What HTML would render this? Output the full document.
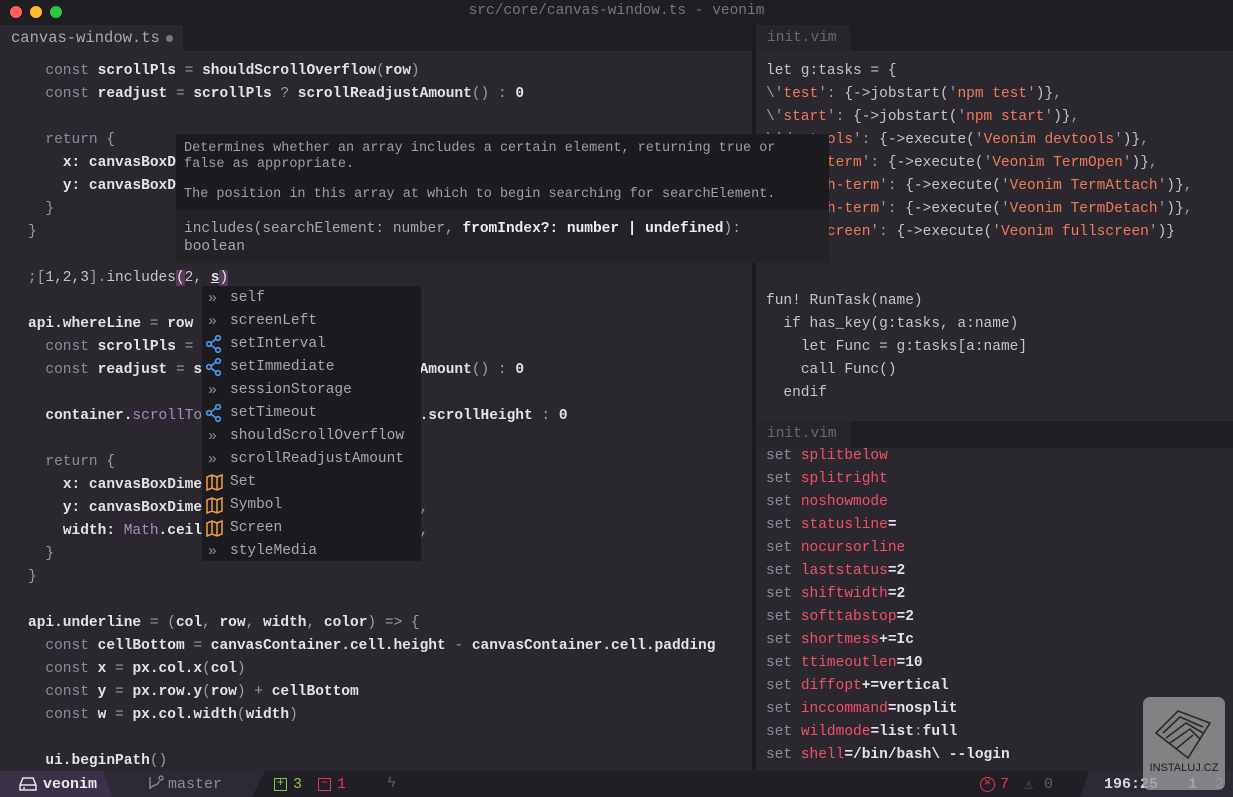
<!DOCTYPE html>
<html><head><meta charset="utf-8"><style>
*{margin:0;padding:0;box-sizing:border-box}
body{width:1233px;height:797px;background:#2a282e;overflow:hidden;position:relative;font-family:"Liberation Mono",monospace;font-size:14.5px;color:#d8d5de}
.abs{position:absolute}
.code{position:absolute;white-space:pre;line-height:23px}
.k{color:#8e8a9a}
.b{color:#e4e1ea;font-weight:bold}
.p{color:#9d99a8}
.s{color:#f07a5a}
.r{color:#f0506a}
.m{color:#a48cc4}
.t{color:#c6c2cf}
</style></head><body>
<!-- title bar -->
<div class="abs" style="left:0;top:0;width:1233px;height:25px;background:#1f1e23"></div>
<div class="abs" style="left:10px;top:6px;width:12px;height:12px;border-radius:6px;background:#fe5f57"></div>
<div class="abs" style="left:30px;top:6px;width:12px;height:12px;border-radius:6px;background:#febc2e"></div>
<div class="abs" style="left:50px;top:6px;width:12px;height:12px;border-radius:6px;background:#28c840"></div>
<div class="abs" style="left:0;top:3px;width:1233px;text-align:center;color:#77737f;font-size:14.5px">src/core/canvas-window.ts - veonim</div>
<!-- left tab bar -->
<div class="abs" style="left:0;top:25px;width:752px;height:26px;background:#1f1e23"></div>
<div class="abs" style="left:0;top:25px;width:183px;height:26px;background:#2a282e"></div>
<div class="abs" style="left:11px;top:29px;color:#aaa6b2;font-size:15.5px">canvas-window.ts</div>
<div class="abs" style="left:166px;top:35px;width:7px;height:7px;border-radius:4px;background:#7a7680"></div>
<!-- divider -->
<div class="abs" style="left:752px;top:25px;width:4px;height:746px;background:#1c1b20"></div>
<!-- right top tab bar -->
<div class="abs" style="left:756px;top:25px;width:477px;height:26px;background:#1f1e23"></div>
<div class="abs" style="left:756px;top:25px;width:94px;height:26px;background:#27252b"></div>
<div class="abs" style="left:767px;top:30px;color:#6a6670">init.vim</div>
<!-- right lower -->
<div class="abs" style="left:756px;top:421px;width:477px;height:27px;background:#1f1e23"></div>
<div class="abs" style="left:756px;top:421px;width:94px;height:27px;background:#27252b"></div>
<div class="abs" style="left:767px;top:426px;color:#6a6670">init.vim</div>

<div class="code" style="left:28px;top:60px">  <span class="k">const</span> <span class="b">scrollPls</span> <span class="p">=</span> <span class="b">shouldScrollOverflow</span><span class="p">(</span><span class="b">row</span><span class="p">)</span>
  <span class="k">const</span> <span class="b">readjust</span> <span class="p">=</span> <span class="b">scrollPls</span> <span class="p">?</span> <span class="b">scrollReadjustAmount</span><span class="p">()</span> <span class="p">:</span> <span class="b">0</span>

  <span class="k">return</span> <span class="p">{</span>
    <span class="b">x: canvasBoxDimensions.x,</span>
    <span class="b">y: canvasBoxDimensions.y,</span>
  <span class="p">}</span>
<span class="p">}</span>

<span class="p">;[</span><span class="t">1,2,3</span><span class="p">].</span><span class="t">includes</span><span style="background:#5a3a5e;color:#e4e1ea">(</span><span class="t">2, </span><span class="b" style="text-decoration:underline">s</span><span style="background:#5a3a5e;color:#e4e1ea">)</span>

<span class="b">api.whereLine</span> <span class="p">=</span> <span class="b">row</span> <span class="p">=&gt; {</span>
  <span class="k">const</span> <span class="b">scrollPls</span> <span class="p">=</span> <span class="b">shouldScrollOverflow(row)</span>
  <span class="k">const</span> <span class="b">readjust</span> <span class="p">=</span> <span class="b">scrollPls ? scrollReadjustAmount</span><span class="p">()</span> <span class="p">:</span> <span class="b">0</span>

  <span class="b">container.</span><span class="m">scrollTop</span> <span class="p">=</span> <span class="b">scrollPls ? container.scrollHeight</span> <span class="p">:</span> <span class="b">0</span>

  <span class="k">return</span> <span class="p">{</span>
    <span class="b">x: canvasBoxDimensions.x,</span>
    <span class="b">y: canvasBoxDimensions.y + row - readjust</span><span class="p">,</span>
    <span class="b">width:</span> <span class="m">Math</span><span class="b">.ceil(window.devicePixelRatio</span><span class="p">),</span>
  <span class="p">}</span>
<span class="p">}</span>

<span class="b">api.underline</span> <span class="p">=</span> <span class="p">(</span><span class="b">col</span><span class="p">,</span> <span class="b">row</span><span class="p">,</span> <span class="b">width</span><span class="p">,</span> <span class="b">color</span><span class="p">)</span> <span class="p">=&gt; {</span>
  <span class="k">const</span> <span class="b">cellBottom</span> <span class="p">=</span> <span class="b">canvasContainer.cell.height</span> <span class="p">-</span> <span class="b">canvasContainer.cell.padding</span>
  <span class="k">const</span> <span class="b">x</span> <span class="p">=</span> <span class="b">px.col.x</span><span class="p">(</span><span class="b">col</span><span class="p">)</span>
  <span class="k">const</span> <span class="b">y</span> <span class="p">=</span> <span class="b">px.row.y</span><span class="p">(</span><span class="b">row</span><span class="p">)</span> <span class="p">+</span> <span class="b">cellBottom</span>
  <span class="k">const</span> <span class="b">w</span> <span class="p">=</span> <span class="b">px.col.width</span><span class="p">(</span><span class="b">width</span><span class="p">)</span>

  <span class="b">ui.beginPath</span><span class="p">()</span></div>

<div class="code" style="left:766px;top:60px"><span class="t">let g:tasks = {</span>
<span class="p">\'</span><span class="s">test</span><span class="p">':</span> <span class="t">{-&gt;jobstart(</span><span class="p">'</span><span class="s">npm test</span><span class="p">'</span><span class="t">)}</span><span class="p">,</span>
<span class="p">\'</span><span class="s">start</span><span class="p">':</span> <span class="t">{-&gt;jobstart(</span><span class="p">'</span><span class="s">npm start</span><span class="p">'</span><span class="t">)}</span><span class="p">,</span>
<span class="p">\'</span><span class="s">devtools</span><span class="p">':</span> <span class="t">{-&gt;execute(</span><span class="p">'</span><span class="s">Veonim devtools</span><span class="p">'</span><span class="t">)}</span><span class="p">,</span>
<span class="p">\'</span><span class="s">open-term</span><span class="p">':</span> <span class="t">{-&gt;execute(</span><span class="p">'</span><span class="s">Veonim TermOpen</span><span class="p">'</span><span class="t">)}</span><span class="p">,</span>
<span class="p">\'</span><span class="s">attach-term</span><span class="p">':</span> <span class="t">{-&gt;execute(</span><span class="p">'</span><span class="s">Veonim TermAttach</span><span class="p">'</span><span class="t">)}</span><span class="p">,</span>
<span class="p">\'</span><span class="s">detach-term</span><span class="p">':</span> <span class="t">{-&gt;execute(</span><span class="p">'</span><span class="s">Veonim TermDetach</span><span class="p">'</span><span class="t">)}</span><span class="p">,</span>
<span class="p">\'</span><span class="s">fullscreen</span><span class="p">':</span> <span class="t">{-&gt;execute(</span><span class="p">'</span><span class="s">Veonim fullscreen</span><span class="p">'</span><span class="t">)}</span>


<span class="t">fun! RunTask(name)</span>
  <span class="t">if has_key(g:tasks, a:name)</span>
    <span class="t">let Func = g:tasks[a:name]</span>
    <span class="t">call Func()</span>
  <span class="t">endif</span></div>

<div class="code" style="left:766px;top:445px"><span class="k">set</span> <span class="r">splitbelow</span>
<span class="k">set</span> <span class="r">splitright</span>
<span class="k">set</span> <span class="r">noshowmode</span>
<span class="k">set</span> <span class="r">statusline</span><span class="b">=</span>
<span class="k">set</span> <span class="r">nocursorline</span>
<span class="k">set</span> <span class="r">laststatus</span><span class="b">=2</span>
<span class="k">set</span> <span class="r">shiftwidth</span><span class="b">=2</span>
<span class="k">set</span> <span class="r">softtabstop</span><span class="b">=2</span>
<span class="k">set</span> <span class="r">shortmess</span><span class="b">+=Ic</span>
<span class="k">set</span> <span class="r">ttimeoutlen</span><span class="b">=10</span>
<span class="k">set</span> <span class="r">diffopt</span><span class="b">+=vertical</span>
<span class="k">set</span> <span class="r">inccommand</span><span class="b">=nosplit</span>
<span class="k">set</span> <span class="r">wildmode</span><span class="b">=list</span><span class="p">:</span><span class="b">full</span>
<span class="k">set</span> <span class="r">shell</span><span class="b">=/bin/bash\ --login</span></div>

<!-- tooltip -->
<div class="abs" style="left:176px;top:134px;width:653px;height:129px;background:#1c1b20"></div>
<div class="abs" style="left:176px;top:210px;width:653px;height:53px;background:#232227"></div>
<div class="code" style="left:184px;top:141px;font-size:13.5px;line-height:16px;color:#a19dab">Determines whether an array includes a certain element, returning true or
false as appropriate.</div>
<div class="code" style="left:184px;top:187px;font-size:13.5px;line-height:16px;color:#a19dab">The position in this array at which to begin searching for searchElement.</div>
<div class="code" style="left:184px;top:220px;font-size:14.5px;line-height:18px;color:#a9a5b2">includes(searchElement: number, <b style="color:#eeebf2">fromIndex?: number | undefined</b>):
boolean</div>

<!-- completion -->
<div class="abs" style="left:202px;top:286px;width:219px;height:275px;background:#1c1b20"></div>
<div class="code" style="left:230px;top:287px;color:#aaa6b2">self
screenLeft
setInterval
setImmediate
sessionStorage
setTimeout
shouldScrollOverflow
scrollReadjustAmount
Set
Symbol
Screen
styleMedia</div>
<div class="code" style="left:208px;top:287px;color:#8e8a9a;font-size:15px">»
»


»

»
»



»</div>
<svg class="abs" style="left:205px;top:287px" width="22" height="275">
<g fill="none" stroke="#4a9df0" stroke-width="1.6">
<g transform="translate(0,46)"><circle cx="4" cy="11" r="2.3"/><circle cx="13" cy="5" r="2.3"/><circle cx="13" cy="17" r="2.3"/><path d="M6 10L11 6M6 12L11 16"/></g>
<g transform="translate(0,69)"><circle cx="4" cy="11" r="2.3"/><circle cx="13" cy="5" r="2.3"/><circle cx="13" cy="17" r="2.3"/><path d="M6 10L11 6M6 12L11 16"/></g>
<g transform="translate(0,115)"><circle cx="4" cy="11" r="2.3"/><circle cx="13" cy="5" r="2.3"/><circle cx="13" cy="17" r="2.3"/><path d="M6 10L11 6M6 12L11 16"/></g>
</g>
<g fill="none" stroke="#f0a040" stroke-width="1.5">
<g transform="translate(0,184)"><path d="M2 6L7 4L12 6L17 4V17L12 19L7 17L2 19Z M7 4V17 M12 6V19"/></g>
<g transform="translate(0,207)"><path d="M2 6L7 4L12 6L17 4V17L12 19L7 17L2 19Z M7 4V17 M12 6V19"/></g>
<g transform="translate(0,230)"><path d="M2 6L7 4L12 6L17 4V17L12 19L7 17L2 19Z M7 4V17 M12 6V19"/></g>
</g>
</svg>

<!-- status bar -->
<div class="abs" style="left:0;top:771px;width:1233px;height:26px;background:#211f26"></div>
<div class="abs" style="left:0;top:771px;width:265px;height:26px;background:#2e2a35;clip-path:polygon(0 0,100% 0,95% 100%,0 100%)"></div>
<div class="abs" style="left:0;top:771px;width:112px;height:26px;background:#3b3247;clip-path:polygon(0 0,92% 0,100% 100%,0 100%)"></div>
<svg class="abs" style="left:18px;top:776px" width="20" height="16"><path d="M2 9L5 2H15L18 9V14H2Z M2 9H18 M5 12h2" fill="none" stroke="#e4e1ea" stroke-width="1.5"/></svg>
<div class="abs" style="left:43px;top:776px;color:#ece9f2;font-weight:bold;font-size:15px">veonim</div>
<svg class="abs" style="left:146px;top:775px" width="18" height="18"><path d="M4 2V14 M13 3a2 2 0 1 1 0 .1 M13 6c0 5-9 4-9 8" fill="none" stroke="#8e8a9a" stroke-width="1.4"/></svg>
<div class="abs" style="left:168px;top:776px;color:#8e8a9a;font-size:15px">master</div>
<div class="abs" style="left:274px;top:778px;width:13px;height:13px;border:1.5px solid #8cc34a;color:#8cc34a;font-size:12px;line-height:9px;text-align:center">+</div>
<div class="abs" style="left:293px;top:776px;color:#8cc34a;font-size:15px">3</div>
<div class="abs" style="left:318px;top:778px;width:13px;height:13px;border:1.5px solid #e8364f;color:#e8364f;font-size:12px;line-height:9px;text-align:center">−</div>
<div class="abs" style="left:337px;top:776px;color:#e8364f;font-size:15px">1</div>
<div class="abs" style="left:387px;top:775px;color:#5c5864;font-size:15px">ϟ</div>
<div class="abs" style="left:1080px;top:771px;width:153px;height:26px;background:#2e2a35;clip-path:polygon(6% 0,100% 0,100% 100%,0 100%)"></div>
<div class="abs" style="left:980px;top:777px;width:15px;height:15px;border:1.6px solid #e8364f;border-radius:8px;color:#e8364f;font-size:12px;line-height:11px;text-align:center">×</div>
<div class="abs" style="left:1000px;top:776px;color:#e8364f;font-size:15px">7</div>
<div class="abs" style="left:1024px;top:775px;color:#5c5864;font-size:15px">⚠</div>
<div class="abs" style="left:1044px;top:776px;color:#5c5864;font-size:15px">0</div>
<div class="abs" style="left:1104px;top:776px;color:#d8d5de;font-weight:bold;font-size:15px">196:25</div>
<div class="abs" style="left:1188px;top:776px;color:#d8d5de;font-weight:bold;font-size:15px">1</div>
<div class="abs" style="left:1215px;top:776px;color:#a19dab;font-size:15px">2</div>

<!-- watermark -->
<div class="abs" style="left:1143px;top:697px;width:82px;height:93px;border-radius:7px;background:rgba(150,150,152,0.82)"></div>
<svg class="abs" style="left:1148px;top:703px" width="72" height="60"><path d="M8 30L30 8L62 20L40 55Z M15 30L32 14L55 24 M18 35L38 20L55 30 M22 40L42 26L52 36 M28 46L45 32" fill="none" stroke="#2a2a2c" stroke-width="1.6"/></svg>
<div class="abs" style="left:1147px;top:762px;width:74px;text-align:center;font-family:'Liberation Sans',sans-serif;font-size:11px;color:#1e1e20">INSTALUJ.CZ</div>
</body></html>
